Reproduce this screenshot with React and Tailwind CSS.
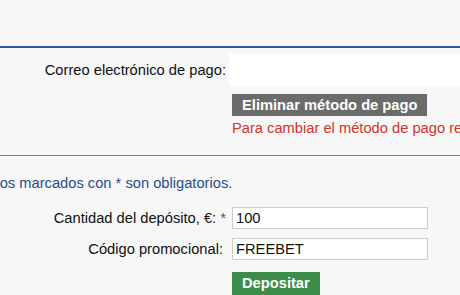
import React from "react";

export default function App() {
    return (
        <div className="w-[460px] h-[295px] overflow-hidden bg-[#f7f7f7] text-[14.7px] leading-[17px] text-[#111]"
            style={{ fontFamily: '"Liberation Sans", Arial, sans-serif' }}>

            {/* top strip */}
            <div className="h-[46px]" />
            <div className="border-t-2 border-[#2d5a9b]" />

            {/* payment method block */}
            <div className="grid grid-cols-[226px_1fr] gap-x-[6px] pt-[6px]">
                <div className="h-[32px] flex items-center justify-end">
                    Correo electrónico de pago:
                </div>
                <div className="-ml-[3px] h-[32px] bg-white" />

                <div />
                <div className="mt-[8px]">
                    <button className="h-[22px] px-[10px] bg-[#6b6b6b] text-white font-bold">
                        Eliminar método de pago
                    </button>
                </div>

                <div />
                <div className="mt-[4px] h-[17px] whitespace-nowrap text-[#d1332d]">
                    Para cambiar el método de pago realice un depósito con otro método.
                </div>
            </div>

            <div className="mt-[18px] border-t border-[#5e82ba]" />

            {/* deposit form */}
            <p className="-ml-[64px] mt-[19px] whitespace-nowrap text-[#1f4f8e]">
                Los campos marcados con * son obligatorios.
            </p>

            <div className="grid grid-cols-[226px_196px] gap-x-[6px] mt-[15px]">
                <label className="h-[22px] flex items-center justify-end whitespace-nowrap">
                    Cantidad del depósito, €:&nbsp;<span className="text-[#2d5a9b]">*</span>
                </label>
                <input
                    defaultValue="100"
                    className="h-[22px] w-[196px] bg-white border border-[#cdcdcd] px-[3px] text-[#111] outline-none"
                />

                <label className="mt-[9px] h-[22px] flex items-center justify-end pr-[3px] whitespace-nowrap">
                    Código promocional:
                </label>
                <input
                    defaultValue="FREEBET"
                    className="mt-[9px] h-[22px] w-[196px] bg-white border border-[#cdcdcd] px-[3px] text-[#111] outline-none"
                />

                <div />
                <div className="mt-[12px]">
                    <button className="h-[23px] px-[10px] bg-[#3c8c4a] text-white font-bold">
                        Depositar
                    </button>
                </div>
            </div>
        </div>
    );
}
